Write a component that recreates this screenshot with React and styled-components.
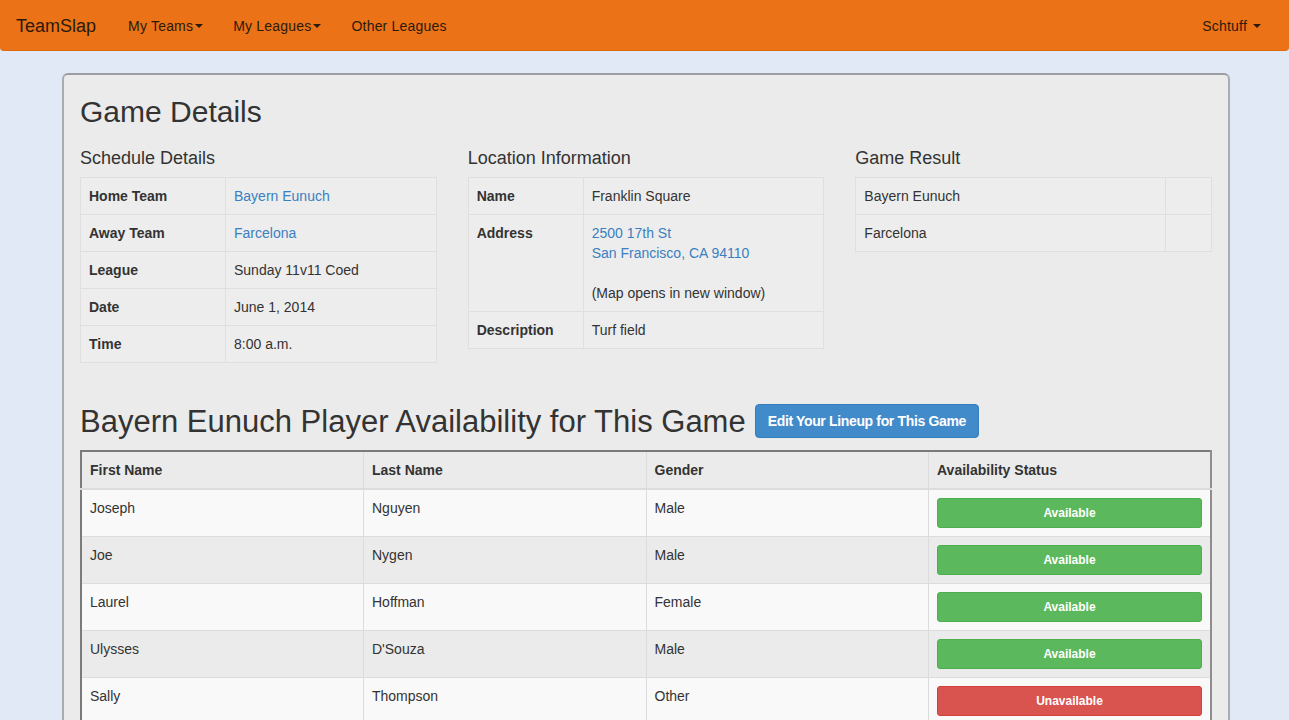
import React from 'react'
import styled, { createGlobalStyle } from 'styled-components'

const GlobalStyle = createGlobalStyle`
  body {
    margin: 0;
    background: #e2e9f6;
    font-family: "Liberation Sans", Helvetica, Arial, sans-serif;
    font-size: 14px;
    line-height: 20px;
    color: #333;
  }
`;

const Navbar = styled.nav`
  display: flex;
  align-items: center;
  height: 51px;
  padding: 2px 28px 0 16px;
  background: #ec7217;
  border-bottom: 1px solid #de6a12;
  border-radius: 0 0 4px 4px;
  box-sizing: border-box;
  color: #2b1a0c;
  letter-spacing: 0.2px;
`;

const Brand = styled.a`
  font-size: 18px;
  margin-right: 32px;
  letter-spacing: 0;
`;

const NavLink = styled.a`
  display: flex;
  align-items: center;
  margin-right: 30px;
  margin-left: ${props => props.$right ? 'auto' : '0'};
  ${props => props.$right && 'margin-right: 0;'}
`;

const Caret = styled.span`
  display: inline-block;
  width: 0;
  height: 0;
  margin-left: ${props => props.$gap || '2px'};
  border-top: 4px solid #2b1a0c;
  border-left: 4px solid transparent;
  border-right: 4px solid transparent;
`;

const Panel = styled.main`
  margin: 22px 59px 0 62px;
  padding: 0 16px 20px;
  background: #ebebeb;
  border: 2px solid #a9adb2;
  border-top-color: #9a9ea3;
  border-radius: 6px;
`;

const H1 = styled.h1`
  margin: ${props => props.$top || '20px'} 0 ${props => props.$bottom || '13px'};
  font-size: ${props => props.$size || '30px'};
  line-height: 33px;
  font-weight: 500;
  display: flex;
  align-items: center;
  gap: 9px;
`;

const Columns = styled.div`
  display: grid;
  grid-template-columns: repeat(3, 1fr);
  gap: 31px;
`;

const H3 = styled.h3`
  margin: 7px 0 9px;
  font-size: 18px;
  line-height: 20px;
  font-weight: 500;
`;

const DetailTable = styled.table`
  width: 100%;
  border-collapse: collapse;
  background: #ededed;

  td {
    padding: 8px;
    border: 1px solid #dfdfdf;
    vertical-align: top;
  }
`;

const Label = styled.td`
  font-weight: bold;
  width: ${props => props.$width};
`;

const Link = styled.a`
  color: #3a7fc1;
`;

const EditButton = styled.a`
  display: inline-block;
  padding: 6px 12px;
  font-size: 14px;
  line-height: 20px;
  font-weight: bold;
  color: #fff;
  background: #428bca;
  border: 1px solid #357ebd;
  border-radius: 4px;
  letter-spacing: -0.35px;
`;

const PlayerTable = styled.table`
  width: 100%;
  border-collapse: collapse;
  table-layout: fixed;
  border-top: 2px solid #7b7b7b;
  border-left: 2px solid #7b7b7b;
  border-right: 2px solid #8e8e8e;

  th, td {
    padding: 8px;
    border: 1px solid #dcdcdc;
    text-align: left;
    vertical-align: top;
  }

  th {
    background: #ebebeb;
    border-bottom-width: 2px;
  }
`;

const Row = styled.tr`
  background: ${props => props.$odd ? '#f9f9f9' : '#ebebeb'};
`;

const StatusButton = styled.div`
  padding: 5px 10px;
  font-size: 12px;
  line-height: 18px;
  font-weight: bold;
  text-align: center;
  color: #fff;
  border-radius: 3px;
  background: ${props => props.$ok ? '#5cb85c' : '#d9534f'};
  border: 1px solid ${props => props.$ok ? '#4cae4c' : '#d43f3a'};
`;

const players = [
  ['Joseph', 'Nguyen', 'Male', true],
  ['Joe', 'Nygen', 'Male', true],
  ['Laurel', 'Hoffman', 'Female', true],
  ['Ulysses', "D'Souza", 'Male', true],
  ['Sally', 'Thompson', 'Other', false],
];

export default function App() {
  return (
    <>
      <GlobalStyle />
      <Navbar>
        <Brand>TeamSlap</Brand>
        <NavLink>My Teams<Caret /></NavLink>
        <NavLink>My Leagues<Caret /></NavLink>
        <NavLink>Other Leagues</NavLink>
        <NavLink $right>Schtuff<Caret $gap="6px" /></NavLink>
      </Navbar>
      <Panel>
        <H1>Game Details</H1>
        <Columns>
          <div>
            <H3>Schedule Details</H3>
            <DetailTable>
              <tbody>
                <tr><Label $width="128px">Home Team</Label><td><Link>Bayern Eunuch</Link></td></tr>
                <tr><Label>Away Team</Label><td><Link>Farcelona</Link></td></tr>
                <tr><Label>League</Label><td>Sunday 11v11 Coed</td></tr>
                <tr><Label>Date</Label><td>June 1, 2014</td></tr>
                <tr><Label>Time</Label><td>8:00 a.m.</td></tr>
              </tbody>
            </DetailTable>
          </div>
          <div>
            <H3>Location Information</H3>
            <DetailTable>
              <tbody>
                <tr><Label $width="98px">Name</Label><td>Franklin Square</td></tr>
                <tr>
                  <Label>Address</Label>
                  <td>
                    <Link>2500 17th St<br />San Francisco, CA 94110</Link>
                    <br /><br />(Map opens in new window)
                  </td>
                </tr>
                <tr><Label>Description</Label><td>Turf field</td></tr>
              </tbody>
            </DetailTable>
          </div>
          <div>
            <H3>Game Result</H3>
            <DetailTable>
              <tbody>
                <tr><td>Bayern Eunuch</td><td style={{ width: 29 }}></td></tr>
                <tr><td>Farcelona</td><td></td></tr>
              </tbody>
            </DetailTable>
          </div>
        </Columns>
        <H1 $top="41px" $bottom="12px" $size="31px">
          Bayern Eunuch Player Availability for This Game
          <EditButton>Edit Your Lineup for This Game</EditButton>
        </H1>
        <PlayerTable>
          <thead>
            <tr>
              <th>First Name</th>
              <th>Last Name</th>
              <th>Gender</th>
              <th>Availability Status</th>
            </tr>
          </thead>
          <tbody>
            {players.map(([first, last, gender, ok], i) => (
              <Row key={first} $odd={i % 2 === 0}>
                <td>{first}</td>
                <td>{last}</td>
                <td>{gender}</td>
                <td><StatusButton $ok={ok}>{ok ? 'Available' : 'Unavailable'}</StatusButton></td>
              </Row>
            ))}
          </tbody>
        </PlayerTable>
      </Panel>
    </>
  )
}
